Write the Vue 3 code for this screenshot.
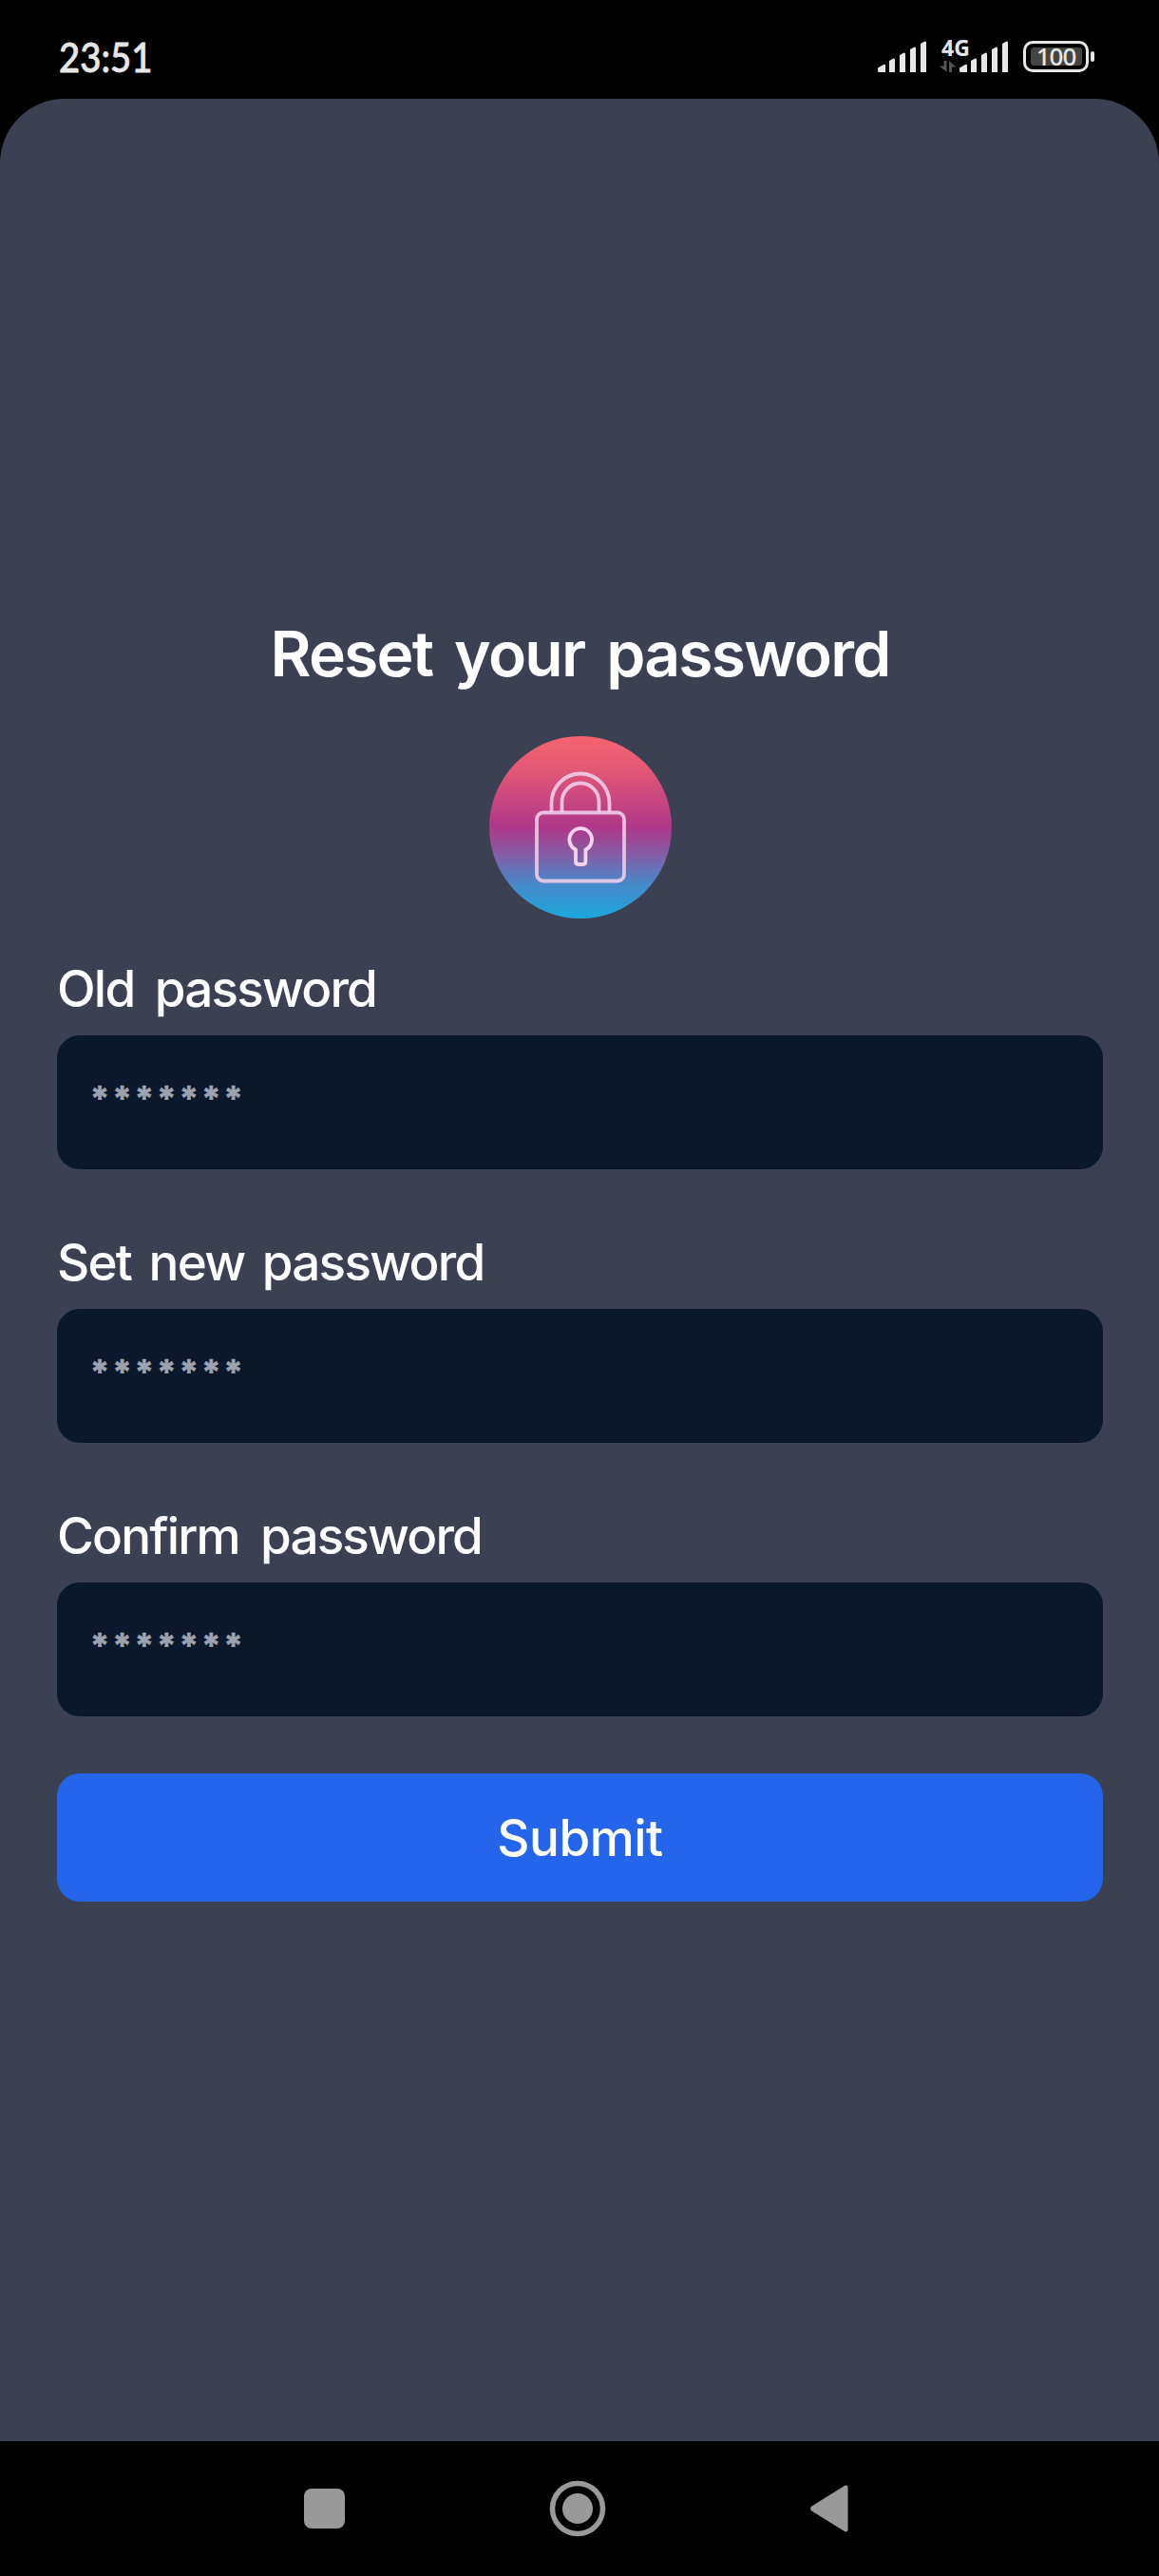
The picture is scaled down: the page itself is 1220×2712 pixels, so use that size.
<script setup>
const fields = [
  { id: 'old', label: 'Old password' },
  { id: 'new', label: 'Set new password' },
  { id: 'confirm', label: 'Confirm password' },
]
</script>

<template>
  <div class="screen">
    <header class="status">
      <span class="time">23:51</span>
      <div class="indicators">
        <svg class="signal" width="51" height="36" viewBox="0 0 51 36">
          <path d="M0 29.5L6 26Q8 25 8 27V34H1.5Q0 34 0 32.5ZM12 22L16.500 19.500Q18 19 18 21V34H12ZM23 16L27.500 13.500Q29 13 29 15V34H23ZM34 10L38.500 7.500Q40 7 40 9V34H34ZM45 4L49.500 1.500Q51 1 51 3V34H45Z" />
        </svg>
        <div class="mobile">
          <span class="net">4G</span>
          <svg class="arrows" width="18" height="14" viewBox="0 0 18 14">
            <path d="M4.500 1H7.500V13L0 6.500H4.500ZM10 1L17.500 7.500H13V13H10Z" />
          </svg>
          <svg class="signal second" width="51" height="36" viewBox="0 0 51 36">
            <path d="M0 29.5L6 26Q8 25 8 27V34H1.5Q0 34 0 32.5ZM12 22L16.500 19.500Q18 19 18 21V34H12ZM23 16L27.500 13.500Q29 13 29 15V34H23ZM34 10L38.500 7.500Q40 7 40 9V34H34ZM45 4L49.500 1.500Q51 1 51 3V34H45Z" />
          </svg>
        </div>
        <div class="battery">
          <div class="cell"><span>100</span></div>
          <i></i>
        </div>
      </div>
    </header>

    <main class="page">
      <h1>Reset your password</h1>
      <svg class="lock" width="192" height="192" viewBox="0 0 192 192">
        <defs>
          <linearGradient id="sunset" x1="0" y1="0" x2="0" y2="1">
            <stop offset="0" stop-color="#f4646f" />
            <stop offset="0.18" stop-color="#e35876" />
            <stop offset="0.5" stop-color="#b03788" />
            <stop offset="0.66" stop-color="#8060a8" />
            <stop offset="0.82" stop-color="#448aca" />
            <stop offset="1" stop-color="#1ca8dc" />
          </linearGradient>
        </defs>
        <circle cx="96" cy="96" r="96" fill="url(#sunset)" />
        <g fill="none" stroke="#f3d3ee" stroke-width="3.800" stroke-linejoin="round">
          <rect x="50" y="80.500" width="92" height="72" rx="7" stroke-opacity=".85" />
          <path d="M65.500 80V70.500a30.500 31 0 0 1 61 0V80M76.500 80V69.500a19.500 20 0 0 1 39 0V80" stroke-opacity=".85" />
          <path d="M91 119.500a11.800 11.800 0 1 1 10.400 0V132q0 3-3 3h-4.400q-3 0-3-3Z" />
        </g>
      </svg>
      <form class="form" @submit.prevent>
        <div v-for="f in fields" :key="f.id" class="field">
          <label :class="['label', f.id]">{{ f.label }}</label>
          <div class="input">*******</div>
        </div>
        <button class="submit">Submit</button>
      </form>
    </main>

    <nav class="nav">
      <svg width="43" height="42" viewBox="0 0 43 42"><rect width="43" height="42" rx="8" /></svg>
      <svg width="60" height="60" viewBox="0 0 60 60">
        <circle cx="30" cy="30" r="26.500" fill="none" stroke="#999" stroke-width="5.500" />
        <circle cx="30" cy="30" r="16" />
      </svg>
      <svg width="40" height="50" viewBox="0 0 40 50">
        <path d="M1 22.800L36 1Q39.500-.5 39.500 3V47Q39.500 50.500 36 49L1 27.200Q-1 25 1 22.800Z" />
      </svg>
    </nav>
  </div>
</template>

<style>
body {
  background: #000;
}
</style>

<style scoped>
.screen {
  display: flex;
  flex-direction: column;
  width: 1220px;
  height: 2712px;
  background: #000;
  font-family: Inter, "Noto Sans", sans-serif;
  color: #fff;
  overflow: hidden;
}
.status {
  display: flex;
  justify-content: space-between;
  height: 104px;
  padding: 42px 68px 0 62px;
  box-sizing: border-box;
  color: #e6e6e6;
}
.time {
  font: 500 43px/36px Lato, sans-serif;
  transform: scaleX(0.89);
  transform-origin: left;
  -webkit-text-stroke: 0.8px #e6e6e6;
}
.indicators {
  display: flex;
  align-items: flex-start;
}
.signal {
  display: block;
  fill: #e6e6e6;
}
.mobile {
  position: relative;
  margin-left: 14px;
  width: 72px;
}
.second {
  margin-left: 21px;
}
.net {
  position: absolute;
  left: 2px;
  top: -2px;
  font: 700 23px/20px "Open Sans", sans-serif;
}
.arrows {
  position: absolute;
  left: 0;
  top: 21px;
  fill: #555;
}
.battery {
  display: flex;
  align-items: center;
  gap: 2px;
  margin: 1px 0 0 16px;
}
.cell {
  display: flex;
  justify-content: center;
  align-items: center;
  box-sizing: border-box;
  width: 69px;
  height: 33px;
  border: 3.5px solid #e6e6e6;
  border-radius: 10px;
}
.cell span {
  width: 54px;
  height: 19px;
  border-radius: 3px;
  background: #444;
  font: 500 26px/19px "Noto Sans", sans-serif;
  letter-spacing: -1px;
  text-align: center;
}
.battery i {
  width: 4px;
  height: 11px;
  border-radius: 2px;
  background: #e6e6e6;
}
.page {
  display: flex;
  flex-direction: column;
  align-items: center;
  height: 2466px;
  padding: 544px 59px 0 60px;
  box-sizing: border-box;
  background: #3b4152;
  border-radius: 68px 68px 0 0;
}
h1 {
  margin: 0;
  font-size: 66px;
  font-weight: 600;
  line-height: 80px;
  letter-spacing: -1.8px;
  word-spacing: 8px;
  white-space: nowrap;
}
.lock {
  margin-top: 47px;
}
.form {
  align-self: stretch;
  display: flex;
  flex-direction: column;
}
.field {
  height: 264px;
  margin-bottom: 24px;
}
.label {
  display: block;
  box-sizing: border-box;
  height: 123px;
  padding-top: 38px;
  font-size: 53px;
  font-weight: 500;
  line-height: 72px;
  letter-spacing: -1.8px;
  word-spacing: 9px;
  white-space: nowrap;
}
.label.new {
  letter-spacing: -1.75px;
  word-spacing: 6px;
}
.label.confirm {
  letter-spacing: -1.85px;
  word-spacing: 10px;
}
.input {
  height: 141px;
  box-sizing: border-box;
  padding: 35px 35px 33px;
  border-radius: 24px;
  background: #0b172a;
  color: #9ca3af;
  font-size: 36px;
  font-weight: 700;
  line-height: 62px;
  letter-spacing: 3.3px;
  -webkit-text-stroke: 0.6px #9ca3af;
}
.submit {
  margin-top: 36px;
  height: 135px;
  border: 0;
  padding: 0;
  border-radius: 24px;
  background: #2465eb;
  color: #fff;
  font: 500 53px/137px Inter, sans-serif;
  letter-spacing: -0.5px;
}
.nav {
  display: flex;
  align-items: center;
  height: 142px;
  padding-left: 320px;
  fill: #999;
}
.nav svg:nth-child(2) {
  margin-left: 215px;
}
.nav svg:nth-child(3) {
  margin-left: 215px;
}
</style>
